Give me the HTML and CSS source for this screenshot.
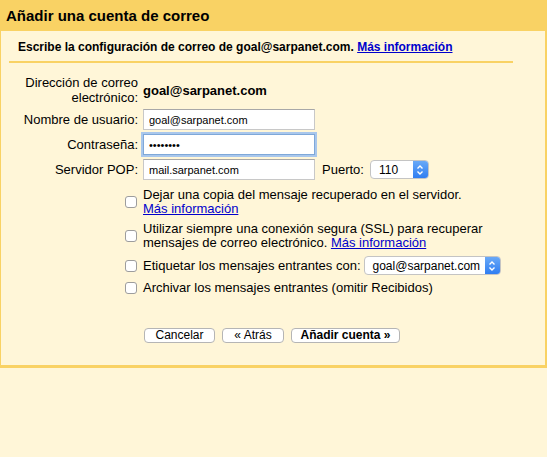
FILE: index.html
```html
<!DOCTYPE html>
<html>
  <head>
    <title>Añadir una cuenta de correo</title>
    <link rel="stylesheet" href="styles.css">
  </head>
  <body>
    <div class="dialog">
      <div class="dialog-title">Añadir una cuenta de correo</div>
      <div class="dialog-body">
        <div class="dialog-intro">
          Escribe la configuración de correo de goal@sarpanet.com.
          <a href="#">Más información</a>
        </div>

        <div class="form">
          <div class="form-label">Dirección de correo electrónico:</div>
          <div class="form-value">goal@sarpanet.com</div>

          <div class="form-label">Nombre de usuario:</div>
          <div class="form-field">
            <input type="text" class="text-input" value="goal@sarpanet.com">
          </div>

          <div class="form-label">Contraseña:</div>
          <div class="form-field">
            <input type="password" class="text-input focused" value="password">
          </div>

          <div class="form-label">Servidor POP:</div>
          <div class="form-field">
            <input type="text" class="text-input" value="mail.sarpanet.com">
            <span class="port-label">Puerto:</span>
            <span class="select port-select">
              <span class="select-text">110</span>
              <span class="select-arrows">
                <svg width="8" height="12" viewBox="0 0 8 12">
                  <path d="M1.5 4.5 L4 2 L6.5 4.5 M1.5 7.5 L4 10 L6.5 7.5" fill="none" stroke="#fff" stroke-width="1.4"/>
                </svg>
              </span>
            </span>
          </div>
        </div>

        <div class="options">
          <label class="option">
            <span class="checkbox"></span>
            <span class="option-text">Dejar una copia del mensaje recuperado en el servidor.<br><a href="#">Más información</a></span>
          </label>
          <label class="option">
            <span class="checkbox"></span>
            <span class="option-text">Utilizar siempre una conexión segura (SSL) para recuperar<br>mensajes de correo electrónico. <a href="#">Más información</a></span>
          </label>
          <label class="option">
            <span class="checkbox"></span>
            <span class="option-text">Etiquetar los mensajes entrantes con:</span>
            <span class="select label-select">
              <span class="select-text">goal@sarpanet.com</span>
              <span class="select-arrows">
                <svg width="8" height="12" viewBox="0 0 8 12">
                  <path d="M1.5 4.5 L4 2 L6.5 4.5 M1.5 7.5 L4 10 L6.5 7.5" fill="none" stroke="#fff" stroke-width="1.4"/>
                </svg>
              </span>
            </span>
          </label>
          <label class="option">
            <span class="checkbox"></span>
            <span class="option-text">Archivar los mensajes entrantes (omitir Recibidos)</span>
          </label>
        </div>

        <div class="actions">
          <button class="btn cancel">Cancelar</button>
          <button class="btn back">« Atrás</button>
          <button class="btn primary">Añadir cuenta »</button>
        </div>
      </div>
    </div>
  </body>
</html>
```

FILE: styles.css
```css
/* Add mail account dialog */
body {
  margin: 0;
  background: #fff6d8;
  font-family: "Liberation Sans", Arial, sans-serif;
  font-size: 13px;
  color: #000;
}

a {
  color: #0000cc;
}

.dialog {
  background: #f9d264;
  padding: 0 2px 3px 1px;
}

.dialog-title {
  height: 31px;
  line-height: 31px;
  padding-left: 5px;
  font-size: 15px;
  font-weight: bold;
}

.dialog-body {
  background: #fff6d8;
  padding: 8px 0 22px 7px;
}

.dialog-intro {
  font-size: 12px;
  font-weight: bold;
  padding: 1px 0 7px 9px;
  margin-left: 1px;
  width: 495px;
  border-bottom: 2px solid #f9d264;
}

/* Settings form */
.form {
  display: grid;
  grid-template-columns: 130px auto;
  column-gap: 5px;
  row-gap: 4px;
  margin-top: 12px;
  align-items: center;
}

.form-label {
  text-align: right;
  line-height: 15px;
}

.form-value {
  font-weight: bold;
}

.form-field {
  display: flex;
  align-items: center;
}

.text-input {
  width: 172px;
  height: 21px;
  box-sizing: border-box;
  border: 1px solid #c8c8c8;
  border-top-color: #a8a8a8;
  padding: 0 5px;
  font-family: "Liberation Sans", Arial, sans-serif;
  font-size: 11px;
  background: #fff;
  outline: none;
}

.text-input.focused {
  border-color: #7fa8d8;
  box-shadow: 0 0 0 2px #a9c7ec;
}

.port-label {
  margin: 0 6px 0 7px;
}

.select {
  display: inline-flex;
  align-items: center;
  height: 19px;
  box-sizing: border-box;
  border: 1px solid #c4c4c4;
  border-radius: 4px;
  background: #fff;
  overflow: hidden;
  font-size: 12px;
}

.select-text {
  flex: 1;
  padding-left: 8px;
}

.select-arrows {
  width: 15px;
  align-self: stretch;
  display: flex;
  align-items: center;
  justify-content: center;
  background: linear-gradient(#6aa9f7, #2f7ef2);
}

.port-select {
  width: 59px;
}

/* Checkbox options */
.options {
  margin: 8px 0 0 117px;
  display: flex;
  flex-direction: column;
  gap: 6px;
}

.option {
  display: flex;
  align-items: center;
  line-height: 14px;
}

.checkbox {
  width: 10px;
  height: 10px;
  border: 1px solid #9d9d9d;
  border-radius: 3px;
  background: #fff;
  margin-right: 6px;
  flex: none;
}

.label-select {
  width: 137px;
  margin-left: 3px;
}

/* Dialog buttons */
.actions {
  margin: 33px 0 0 136px;
  display: flex;
  gap: 7px;
}

.btn {
  height: 15px;
  padding: 0;
  box-sizing: border-box;
  border: 1px solid #b5b5b5;
  border-radius: 4px;
  background: #fff;
  font-family: "Liberation Sans", Arial, sans-serif;
  font-size: 12px;
  line-height: 13px;
}

.btn.cancel {
  width: 71px;
}

.btn.back {
  width: 62px;
}

.btn.primary {
  width: 109px;
  font-weight: bold;
}
```
